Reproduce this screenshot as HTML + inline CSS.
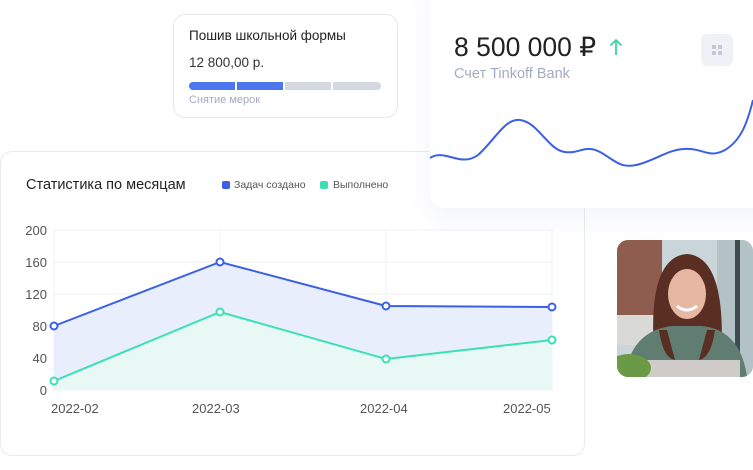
<!DOCTYPE html>
<html><head><meta charset="utf-8"><style>
*{margin:0;padding:0;box-sizing:border-box}
body{width:753px;height:470px;background:#fff;position:relative;overflow:hidden;font-family:"Liberation Sans",sans-serif}
.abs{position:absolute}
.card1{left:173px;top:14px;width:225px;height:104px;border:1px solid #e6e8f0;border-radius:12px;background:#fff}
.stats{left:0;top:151px;width:585px;height:305px;border:1px solid #e8eaf2;border-radius:12px;background:#fff}
.wave{left:430px;top:-20px;width:340px;height:228px;background:#fff;border-radius:0 0 0 14px;box-shadow:0 12px 26px rgba(120,130,200,0.08)}
</style></head><body>
<div class="abs stats">
  <div class="abs" style="left:25px;top:25px;font-size:14.5px;color:#222">Статистика по месяцам</div>
  <div class="abs" style="left:221px;top:29px;width:8px;height:8px;border-radius:2px;background:#3b5fe6"></div>
  <div class="abs" style="left:233px;top:27px;font-size:10.5px;color:#555">Задач создано</div>
  <div class="abs" style="left:319px;top:29px;width:8px;height:8px;border-radius:2px;background:#39e0b4"></div>
  <div class="abs" style="left:332px;top:27px;font-size:10.5px;color:#555">Выполнено</div>
</div>
<svg class="abs" style="left:0;top:0" width="753" height="470">
  <g stroke="#eef0f7" stroke-width="1" fill="none">
    <line x1="54" y1="230" x2="552" y2="230"/><line x1="54" y1="262" x2="552" y2="262"/>
    <line x1="54" y1="294" x2="552" y2="294"/><line x1="54" y1="326" x2="552" y2="326"/>
    <line x1="54" y1="358" x2="552" y2="358"/><line x1="54" y1="390" x2="552" y2="390"/>
    <line x1="54" y1="230" x2="54" y2="390"/><line x1="220" y1="230" x2="220" y2="390"/>
    <line x1="386" y1="230" x2="386" y2="390"/><line x1="552" y1="230" x2="552" y2="390"/>
  </g>
  <polygon points="54,326 220,262 386,306 552,307 552,390 54,390" fill="#e8eefb"/>
  <polygon points="54,381 220,312 386,359 552,340 552,390 54,390" fill="#e8f9f5"/>
  <polyline points="54,326 220,262 386,306 552,307" fill="none" stroke="#3b5fe6" stroke-width="2"/>
  <polyline points="54,381 220,312 386,359 552,340" fill="none" stroke="#39e0b4" stroke-width="2"/>
  <g fill="#fff" stroke="#3b5fe6" stroke-width="2"><circle cx="54" cy="326" r="3.5"/><circle cx="220" cy="262" r="3.5"/><circle cx="386" cy="306" r="3.5"/><circle cx="552" cy="307" r="3.5"/></g>
  <g fill="#fff" stroke="#39e0b4" stroke-width="2"><circle cx="54" cy="381" r="3.5"/><circle cx="220" cy="312" r="3.5"/><circle cx="386" cy="359" r="3.5"/><circle cx="552" cy="340" r="3.5"/></g>
  <g font-family="Liberation Sans" font-size="13" fill="#555" text-anchor="end">
    <text x="47" y="235">200</text><text x="47" y="267">160</text><text x="47" y="299">120</text>
    <text x="47" y="331">80</text><text x="47" y="363">40</text><text x="47" y="395">0</text>
  </g>
  <g font-family="Liberation Sans" font-size="13" fill="#555">
    <text x="51" y="413">2022-02</text><text x="192" y="413">2022-03</text><text x="360" y="413">2022-04</text><text x="503" y="413">2022-05</text>
  </g>
</svg>
<div class="abs wave"></div>
<svg class="abs" style="left:0;top:0" width="753" height="470">
  <path d="M430,158 C445,148 460,168 478,155 C495,140 505,118 520,120 C538,122 548,150 565,152 C580,154 585,144 600,152 C615,160 620,170 640,164 C660,158 670,148 690,149 C705,150 710,158 725,150 C742,140 748,120 753,100" fill="none" stroke="#3b5fe6" stroke-width="2"/>
</svg>
<div class="abs" style="left:454px;top:32px;font-size:26.5px;color:#222">8 500 000 ₽</div>
<svg class="abs" style="left:609px;top:38px" width="14" height="18"><path d="M7,17 V2 M1.5,7.5 L7,2 L12.5,7.5" fill="none" stroke="#39d4a4" stroke-width="1.8"/></svg>
<div class="abs" style="left:454px;top:66px;font-size:14.5px;color:#a3abc4">Счет Tinkoff Bank</div>
<div class="abs" style="left:701px;top:34px;width:32px;height:32px;border-radius:6px;background:#f0f1f6">
  <div class="abs" style="left:11px;top:11px;width:4px;height:4px;background:#c5c9d6"></div>
  <div class="abs" style="left:17px;top:11px;width:4px;height:4px;background:#c5c9d6"></div>
  <div class="abs" style="left:11px;top:17px;width:4px;height:4px;background:#c5c9d6"></div>
  <div class="abs" style="left:17px;top:17px;width:4px;height:4px;background:#c5c9d6"></div>
</div>
<div class="abs card1">
  <div class="abs" style="left:15px;top:13px;font-size:13.5px;color:#222">Пошив школьной формы</div>
  <div class="abs" style="left:15px;top:40px;font-size:13.5px;color:#333">12 800,00 р.</div>
  <div class="abs" style="left:15px;top:67px;width:46px;height:8px;background:#4e76f0;border-radius:4px 0 0 4px"></div>
  <div class="abs" style="left:63px;top:67px;width:46px;height:8px;background:#4e76f0"></div>
  <div class="abs" style="left:111px;top:67px;width:46px;height:8px;background:#d4d9e1"></div>
  <div class="abs" style="left:159px;top:67px;width:48px;height:8px;background:#d4d9e1;border-radius:0 4px 4px 0"></div>
  <div class="abs" style="left:15px;top:79px;font-size:11px;color:#a3abc4">Снятие мерок</div>
</div>
<svg class="abs" style="left:617px;top:240px" width="136" height="137">
  <defs><clipPath id="c"><rect width="136" height="137" rx="11"/></clipPath></defs>
  <g clip-path="url(#c)">
    <rect width="136" height="137" fill="#c9d5d8"/>
    <rect width="45" height="75" fill="#8f5d50"/>
    <rect y="75" width="45" height="30" fill="#d9d9d6"/>
    <rect x="100" width="36" height="137" fill="#b2c2c5"/>
    <rect x="118" width="5" height="137" fill="#3f4a4e"/>
    <path d="M38,120 C32,60 40,16 70,14 C98,16 108,55 104,120 Z" fill="#5a2e22"/>
    <path d="M8,137 C12,100 35,88 55,86 L85,86 C105,88 125,100 130,137 Z" fill="#5f7d70"/>
    <path d="M42,90 C45,110 50,118 58,120 L50,90 Z M98,90 C95,110 90,118 82,120 L90,90Z" fill="#5a2e22"/>
    <ellipse cx="70" cy="54" rx="19" ry="25" fill="#e6b7a2"/>
    <path d="M60,66 Q70,74 80,66" stroke="#fff" stroke-width="3" fill="none"/>
    <rect x="28" y="120" width="95" height="20" fill="#cfcbc9"/>
    <ellipse cx="12" cy="128" rx="22" ry="14" fill="#6a9a45"/>
  </g>
</svg>
</body></html>
